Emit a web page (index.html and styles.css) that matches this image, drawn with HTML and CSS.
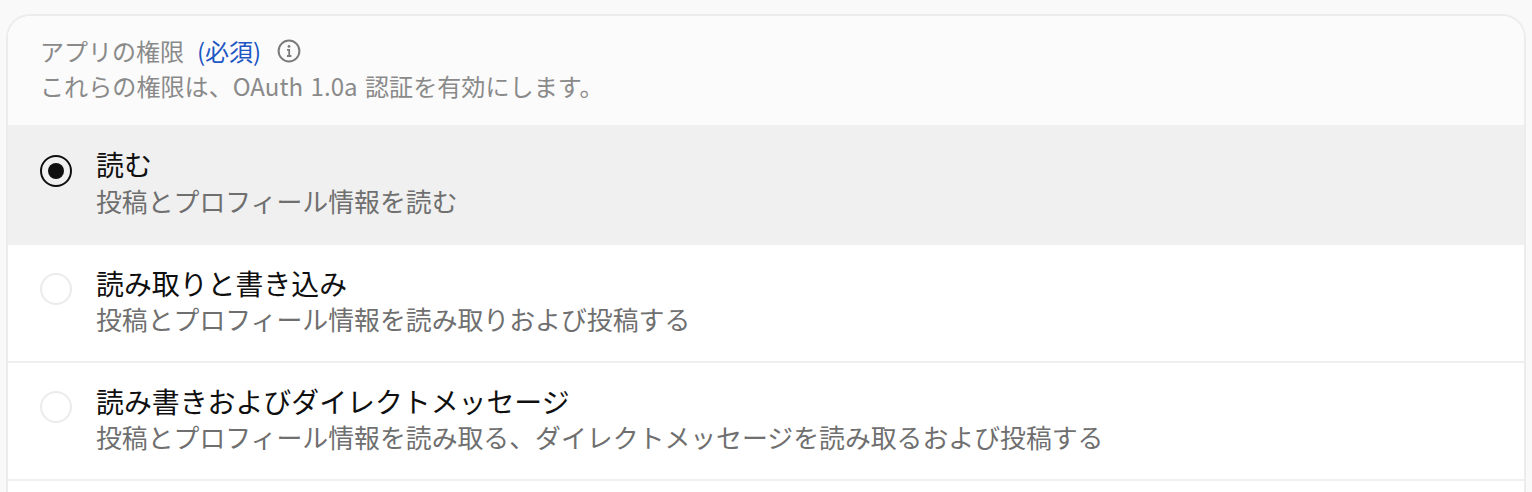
FILE: index.html
```html
<!DOCTYPE html>
<html lang="ja">

<head>
    <meta charset="UTF-8">
    <title>アプリの権限</title>
    <link rel="stylesheet" href="styles.css">
</head>

<body>
    <div class="perm-card">
        <div class="perm-head">
            <div class="perm-title">
                <span>アプリの権限</span>
                <span class="required">(必須)</span>
                <svg class="info-icon" width="24" height="24" viewBox="0 0 24 24" fill="none" stroke="#7b7b7b">
                    <circle cx="12" cy="12" r="10.4" stroke-width="2" />
                    <path d="M10 10.8h2.2v6M10 17h4.4" stroke-width="1.8" />
                    <circle cx="12" cy="7.4" r="1.4" fill="#7b7b7b" stroke="none" />
                </svg>
            </div>
            <div class="perm-desc">これらの権限は、OAuth 1.0a 認証を有効にします。</div>
        </div>
        <div class="perm-row selected">
            <span class="radio"></span>
            <div class="perm-text">
                <div class="perm-name">読む</div>
                <div class="perm-sub">投稿とプロフィール情報を読む</div>
            </div>
        </div>
        <div class="perm-row">
            <span class="radio"></span>
            <div class="perm-text">
                <div class="perm-name">読み取りと書き込み</div>
                <div class="perm-sub">投稿とプロフィール情報を読み取りおよび投稿する</div>
            </div>
        </div>
        <div class="perm-row">
            <span class="radio"></span>
            <div class="perm-text">
                <div class="perm-name">読み書きおよびダイレクトメッセージ</div>
                <div class="perm-sub">投稿とプロフィール情報を読み取る、ダイレクトメッセージを読み取るおよび投稿する</div>
            </div>
        </div>
    </div>
</body>

</html>
```

FILE: styles.css
```css
html,
body {
    height: 100%;
    overflow: hidden;
}

body {
    margin: 0;
    padding: 14px 6px 0 6px;
    box-sizing: border-box;
    background-color: #f9f9f9;
    font-family: "Noto Sans CJK JP", "Noto Sans", sans-serif;
}

.perm-card {
    background-color: white;
    border: 2px solid #ececec;
    border-bottom: none;
    border-radius: 24px 24px 0 0;
    height: 500px;
    overflow: hidden;
}

.perm-head {
    box-sizing: border-box;
    height: 109px;
    padding: 17px 32px 0 32px;
    background-color: #fbfbfb;
    color: #8a8a8a;
    font-size: 24px;
    line-height: 36px;
}

.perm-title {
    display: flex;
    align-items: center;
    height: 35px;
}

.perm-desc {
    font-size: 24.1px;
    word-spacing: 2px;
}

.required {
    color: #1d57c4;
    margin-left: 13px;
}

.info-icon {
    margin-left: 16px;
}

.perm-row {
    box-sizing: border-box;
    height: 118px;
    display: flex;
    align-items: flex-start;
    padding: 20px 0 0 32px;
    border-bottom: 2px solid #efefef;
}

.perm-row.selected {
    height: 120px;
    padding-top: 21px;
    background-color: #f0f0f0;
    border-bottom: none;
}

.radio {
    box-sizing: border-box;
    width: 32px;
    height: 32px;
    flex: none;
    margin: 8px 24px 0 0;
    border: 2px solid #ebebeb;
    border-radius: 50%;
    background-color: white;
}

.selected .radio {
    margin-top: 9px;
    border-color: #0f0f0f;
    background-color: transparent;
    display: flex;
    align-items: center;
    justify-content: center;
}

.selected .radio::after {
    content: "";
    width: 16px;
    height: 16px;
    border-radius: 50%;
    background-color: #0f0f0f;
}

.perm-name {
    font-size: 27.9px;
    line-height: 36px;
    color: #0f0f0f;
}

.perm-sub {
    font-size: 25.87px;
    line-height: 36px;
    color: #6f6f6f;
}

.selected .perm-sub {
    padding-top: 1px;
}
```
